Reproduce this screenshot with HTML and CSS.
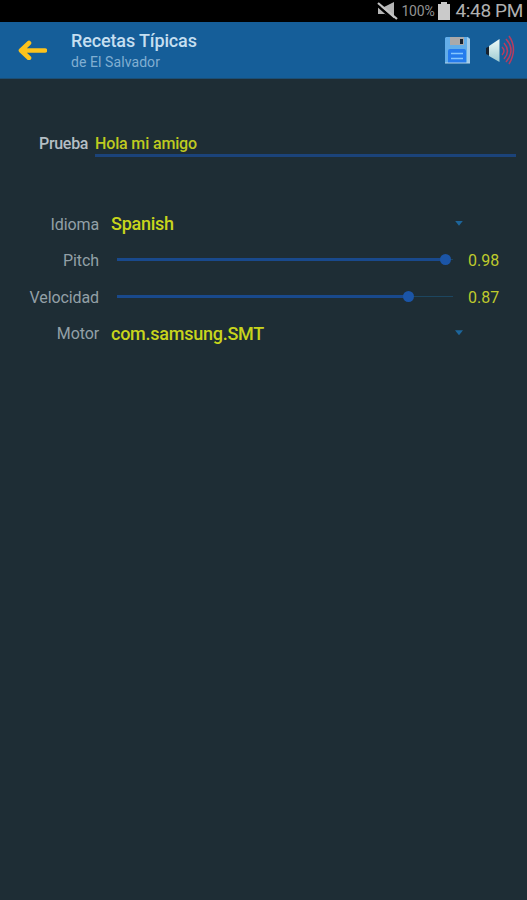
FILE: index.html
```html
<!DOCTYPE html>
<html lang="es">
<head>
<meta charset="UTF-8">
<meta name="viewport" content="width=device-width, initial-scale=1.0">
<title>Recetas Típicas</title>
<link rel="stylesheet" href="styles.css">
</head>
<body>
<div class="status-bar">
    <svg class="mute-icon" viewBox="0 0 22 20" width="22" height="20">
        <path d="M1 6h6l10-5v17l-9-5H1z" fill="#b5b5b5"/>
        <path d="M0 4l18 16" stroke="#000" stroke-width="2.5"/>
        <path d="M1 2l19 16" stroke="#c4c4c4" stroke-width="2.2"/>
    </svg>
    <span class="battery-text">100%</span>
    <svg class="battery-icon" viewBox="0 0 14 18" width="14" height="18">
        <path d="M4 0h6v2h3v16H1V2h3z" fill="#cacaca"/>
    </svg>
    <span class="clock">4:48 PM</span>
</div>

<header class="app-bar">
    <svg class="back-icon" viewBox="0 0 30 20" width="30" height="20">
        <path d="M28 10.500H4M12 3L4 10.500l8 7.500" fill="none" stroke="#fdc31c" stroke-width="4.600" stroke-linecap="round" stroke-linejoin="round"/>
    </svg>
    <div class="titles">
        <h1 class="title">Recetas Típicas</h1>
        <p class="subtitle">de El Salvador</p>
    </div>
    <svg class="save-icon" viewBox="0 0 27 28" width="27" height="28">
        <path d="M2 1h22l2 2v24H1V2z" fill="#62ade9"/>
        <path d="M23 1l3 2v24h-3z" fill="#a3cce9"/>
        <path d="M6 1h14v8H6z" fill="#aaa9aa"/>
        <path d="M16 3h3v5h-3z" fill="#17212e"/>
        <path d="M4 15q0-2 2-2h14q2 0 2 2v12H4z" fill="#257bed"/>
        <path d="M7 17.500h12M7 22.500h12" stroke="#85c7ff" stroke-width="1.7"/>
        <path d="M1 27h25" stroke="#b7d5e8" stroke-width="1"/>
    </svg>
    <svg class="sound-icon" viewBox="0 0 30 30" width="30" height="30">
        <defs>
            <linearGradient id="cone" x2="0" y2="1">
                <stop offset="0" stop-color="#f0fbf8"/>
                <stop offset="1" stop-color="#9ecbd2"/>
            </linearGradient>
        </defs>
        <path d="M1 13l4-2v10l-4-2z" fill="#17212e"/>
        <path d="M4 11L14.500 4v23L4 21z" fill="url(#cone)"/>
        <path d="M17 12q4 4 0 8M19 8q7 8 0 16M21 4q10 11 0 23M24 1q9 13 0 28" fill="none" stroke="#b73c60" stroke-width="1.5"/>
    </svg>
</header>

<main class="settings">
    <div class="test-row">
        <label class="test-label" for="prueba">Prueba</label>
        <input class="test-input" id="prueba" type="text" value="Hola mi amigo">
    </div>

    <div class="options">
        <span class="label">Idioma</span>
        <div class="spinner">
            <span class="spinner-text">Spanish</span>
            <span class="caret"></span>
        </div>

        <span class="label">Pitch</span>
        <div class="slider">
            <div class="track"><div class="fill" style="width: 98%"><span class="thumb"></span></div></div>
            <span class="value">0.98</span>
        </div>

        <span class="label">Velocidad</span>
        <div class="slider">
            <div class="track"><div class="fill" style="width: 87%"><span class="thumb"></span></div></div>
            <span class="value">0.87</span>
        </div>

        <span class="label">Motor</span>
        <div class="spinner">
            <span class="spinner-text">com.samsung.SMT</span>
            <span class="caret"></span>
        </div>
    </div>
</main>
</body>
</html>
```

FILE: styles.css
```css
* {
    box-sizing: border-box;
}

body {
    margin: 0;
    min-height: 100vh;
    background: #1e2d35;
    font-family: Roboto, "Liberation Sans", sans-serif;
    color: #93a0a7;
}

.status-bar {
    display: flex;
    align-items: center;
    justify-content: flex-end;
    height: 22px;
    padding-right: 4px;
    background: #000;
    color: #b0b0b0;
    white-space: nowrap;
}

.battery-text {
    margin-left: 2px;
    font-size: 14px;
    letter-spacing: -0.2px;
    line-height: 22px;
    color: #929292;
}

.battery-icon {
    margin: 0 5px 0 2px;
}

.clock {
    font-size: 19px;
    letter-spacing: -0.35px;
    line-height: 22px;
}

.app-bar {
    display: flex;
    align-items: center;
    height: 57px;
    padding: 0 12px 0 17px;
    background: #155e99;
    border-bottom: 1px solid #1b4e75;
}

.titles {
    flex: 1;
    margin-left: 24px;
}

.title {
    margin: 0;
    font-size: 18px;
    font-weight: 500;
    letter-spacing: -0.13px;
    line-height: 23px;
    color: #c5dff0;
}

.subtitle {
    margin: 0;
    font-size: 14px;
    letter-spacing: 0.08px;
    line-height: 20px;
    color: #81afd2;
}

.save-icon {
    margin-right: 14px;
}

.settings {
    padding: 50px 11px 0 0;
}

.test-row {
    display: flex;
    height: 28px;
    padding-left: 39px;
}

.test-label {
    width: 56px;
    padding-top: 1px;
    font-size: 16px;
    font-weight: 500;
    letter-spacing: -0.3px;
    line-height: 28px;
    color: #b4bec4;
}

.test-input {
    flex: 1;
    min-width: 0;
    height: 28px;
    padding: 3px 0 0;
    border: 0;
    border-bottom: 3px solid #1b437a;
    outline: none;
    background: transparent;
    font-family: inherit;
    font-size: 16px;
    font-weight: 500;
    letter-spacing: -0.15px;
    color: #bfca20;
}

.options {
    display: grid;
    grid-template-columns: 99px 1fr;
    grid-auto-rows: 36.5px;
    column-gap: 12px;
    align-items: center;
    margin-top: 48px;
}

.label {
    padding-top: 2px;
    font-size: 16px;
    letter-spacing: -0.1px;
    text-align: right;
}

.spinner {
    display: flex;
    align-items: center;
    justify-content: space-between;
    padding-right: 53px;
}

.spinner-text {
    padding-top: 2px;
    font-size: 18px;
    font-weight: 500;
    letter-spacing: -0.25px;
    line-height: 24px;
    color: #c8d51c;
}

.caret {
    width: 8px;
    height: 5px;
    background: #1d659b;
    clip-path: polygon(0 0, 100% 0, 50% 100%);
}

.slider {
    display: flex;
    align-items: center;
    padding-left: 6px;
}

.track {
    width: 336px;
    height: 1px;
    display: flex;
    align-items: center;
    background: #1d4660;
}

.fill {
    position: relative;
    height: 3px;
    background: #19498c;
}

.thumb {
    position: absolute;
    top: -4px;
    right: -5px;
    width: 11px;
    height: 11px;
    border-radius: 50%;
    background: #1b55a7;
}

.value {
    margin-left: 15px;
    padding-top: 2px;
    font-size: 16px;
    color: #bfca2c;
}
```
